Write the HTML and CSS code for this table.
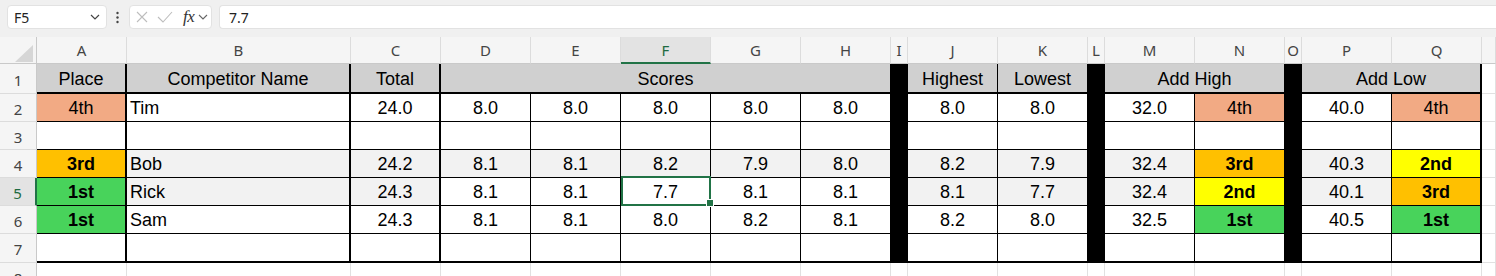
FILE: index.html
```html
<!DOCTYPE html>
<html>
<head>
<meta charset="utf-8">
<link rel="stylesheet" href="styles.css">
</head>
<body>
<div class="toolbar">
  <div class="namebox"><span>F5</span><svg class="chev" width="10" height="6" viewBox="0 0 10 6"><path d="M1 1 L5 5 L9 1" fill="none" stroke="#444" stroke-width="1.2"/></svg></div>
  <svg class="dots" width="3" height="24" viewBox="0 0 3 24"><circle cx="1.5" cy="8" r="1.2" fill="#444"/><circle cx="1.5" cy="12.5" r="1.2" fill="#444"/><circle cx="1.5" cy="17" r="1.2" fill="#444"/></svg>
  <div class="fxbox">
    <svg class="ic-x" width="12" height="12" viewBox="0 0 12 12"><path d="M1 1 L11 11 M11 1 L1 11" stroke="#bdbdbd" stroke-width="1.1" fill="none"/></svg>
    <svg class="ic-ok" width="16" height="12" viewBox="0 0 16 12"><path d="M1 6 L6 11 L15 1" stroke="#bdbdbd" stroke-width="1.1" fill="none"/></svg>
    <span class="fx">fx</span>
    <svg class="chev2" width="10" height="6" viewBox="0 0 10 6"><path d="M1 1 L5 5 L9 1" fill="none" stroke="#666" stroke-width="1.1"/></svg>
  </div>
  <div class="formula">7.7</div>
</div>

<div class="sheet">
  <!-- column headers -->
  <div class="corner"><svg width="37" height="27" viewBox="0 0 37 27"><polygon points="33,8 33,25 15,25" fill="#d6d6d6"/></svg></div>
  <div class="ch">A</div><div class="ch">B</div><div class="ch">C</div><div class="ch">D</div><div class="ch">E</div>
  <div class="ch selcol">F</div><div class="ch">G</div><div class="ch">H</div><div class="ch">I</div><div class="ch">J</div>
  <div class="ch">K</div><div class="ch">L</div><div class="ch">M</div><div class="ch">N</div><div class="ch">O</div>
  <div class="ch">P</div><div class="ch">Q</div><div class="ch"></div>

  <!-- row 1 -->
  <div class="rh">1</div>
  <div class="c hd r1 tr">Place</div>
  <div class="c hd r1 tr">Competitor Name</div>
  <div class="c hd r1 tr">Total</div>
  <div class="c hd r1 span5">Scores</div>
  <div class="k"></div>
  <div class="c hd r1">Highest</div>
  <div class="c hd r1">Lowest</div>
  <div class="k"></div>
  <div class="c hd r1 span2">Add High</div>
  <div class="k"></div>
  <div class="c hd r1 span2 tr">Add Low</div>
  <div class="g"></div>

  <!-- row 2 -->
  <div class="rh">2</div>
  <div class="c tr salmon">4th</div>
  <div class="c tr l">Tim</div>
  <div class="c tr">24.0</div>
  <div class="c">8.0</div><div class="c">8.0</div><div class="c">8.0</div><div class="c">8.0</div><div class="c">8.0</div>
  <div class="k"></div>
  <div class="c">8.0</div><div class="c">8.0</div>
  <div class="k"></div>
  <div class="c">32.0</div><div class="c salmon">4th</div>
  <div class="k"></div>
  <div class="c">40.0</div><div class="c tr salmon">4th</div>
  <div class="g"></div>

  <!-- row 3 -->
  <div class="rh">3</div>
  <div class="c tr"></div><div class="c tr"></div><div class="c tr"></div>
  <div class="c"></div><div class="c"></div><div class="c"></div><div class="c"></div><div class="c"></div>
  <div class="k"></div>
  <div class="c"></div><div class="c"></div>
  <div class="k"></div>
  <div class="c"></div><div class="c"></div>
  <div class="k"></div>
  <div class="c"></div><div class="c tr"></div>
  <div class="g"></div>

  <!-- row 4 -->
  <div class="rh">4</div>
  <div class="c tr b orange">3rd</div>
  <div class="c tr l lt">Bob</div>
  <div class="c tr lt">24.2</div>
  <div class="c lt">8.1</div><div class="c lt">8.1</div><div class="c lt">8.2</div><div class="c lt">7.9</div><div class="c lt">8.0</div>
  <div class="k"></div>
  <div class="c lt">8.2</div><div class="c lt">7.9</div>
  <div class="k"></div>
  <div class="c lt">32.4</div><div class="c b orange">3rd</div>
  <div class="k"></div>
  <div class="c lt">40.3</div><div class="c tr b yellow">2nd</div>
  <div class="g"></div>

  <!-- row 5 -->
  <div class="rh selrow">5</div>
  <div class="c tr b green">1st</div>
  <div class="c tr l lt">Rick</div>
  <div class="c tr lt">24.3</div>
  <div class="c">8.1</div><div class="c">8.1</div><div class="c sel">7.7</div><div class="c">8.1</div><div class="c">8.1</div>
  <div class="k"></div>
  <div class="c lt">8.1</div><div class="c lt">7.7</div>
  <div class="k"></div>
  <div class="c lt">32.4</div><div class="c b yellow">2nd</div>
  <div class="k"></div>
  <div class="c lt">40.1</div><div class="c tr b orange">3rd</div>
  <div class="g"></div>

  <!-- row 6 -->
  <div class="rh">6</div>
  <div class="c tr b green">1st</div>
  <div class="c tr l">Sam</div>
  <div class="c tr">24.3</div>
  <div class="c">8.1</div><div class="c">8.1</div><div class="c">8.0</div><div class="c">8.2</div><div class="c">8.1</div>
  <div class="k"></div>
  <div class="c">8.2</div><div class="c">8.0</div>
  <div class="k"></div>
  <div class="c">32.5</div><div class="c b green">1st</div>
  <div class="k"></div>
  <div class="c">40.5</div><div class="c tr b green">1st</div>
  <div class="g"></div>

  <!-- row 7 -->
  <div class="rh">7</div>
  <div class="c r7 tr"></div><div class="c r7 tr"></div><div class="c r7 tr"></div>
  <div class="c r7"></div><div class="c r7"></div><div class="c r7"></div><div class="c r7"></div><div class="c r7"></div>
  <div class="k"></div>
  <div class="c r7"></div><div class="c r7"></div>
  <div class="k"></div>
  <div class="c r7"></div><div class="c r7"></div>
  <div class="k"></div>
  <div class="c r7"></div><div class="c r7 tr"></div>
  <div class="g"></div>

  <!-- row 8 -->
  <div class="rh">8</div>
  <div class="g"></div><div class="g"></div><div class="g"></div><div class="g"></div><div class="g"></div>
  <div class="g"></div><div class="g"></div><div class="g"></div><div class="g"></div><div class="g"></div>
  <div class="g"></div><div class="g"></div><div class="g"></div><div class="g"></div><div class="g"></div>
  <div class="g"></div><div class="g"></div><div class="g"></div>
</div>
</body>
</html>
```

FILE: styles.css
```css
* { box-sizing: border-box; }

body {
  margin: 0;
  width: 1496px;
  height: 276px;
  overflow: hidden;
  background: #fff;
  font-family: "Liberation Sans", Arial, sans-serif;
}

/* ---------- formula bar ---------- */
.toolbar {
  display: flex;
  align-items: flex-start;
  height: 37px;
  padding: 5px 0 0 7px;
  background: #f0f0f0;
}

.namebox {
  width: 100px;
  height: 24px;
  background: #fff;
  border: 1px solid #e2e2e2;
  border-radius: 4px;
  display: flex;
  align-items: center;
  justify-content: space-between;
  padding: 0 6px 0 6px;
  font: 14px "Noto Sans", sans-serif;
  color: #222;
}

.dots {
  margin-left: 9px;
}

.fxbox {
  margin-left: 10px;
  width: 83px;
  height: 24px;
  background: #fff;
  border: 1px solid #e2e2e2;
  border-radius: 4px;
  display: flex;
  align-items: center;
  padding-left: 6px;
}

.ic-ok { margin-left: 9px; }

.fx {
  margin-left: 10px;
  font: italic 17px "Liberation Serif", "DejaVu Serif", serif;
  color: #333;
  letter-spacing: -0.5px;
}

.chev2 { margin-left: 4px; }

.formula {
  margin-left: 7px;
  flex: 1;
  height: 24px;
  background: #fff;
  border: 1px solid #e2e2e2;
  border-right: none;
  border-radius: 4px 0 0 4px;
  padding-left: 9px;
  display: flex;
  align-items: center;
  font: 14px "Noto Sans", sans-serif;
  color: #222;
}

/* ---------- sheet ---------- */
.sheet {
  display: grid;
  grid-template-columns: 37px 90px 224px repeat(6, 90px) 17px 90px 90px 17px 90px 90px 17px 90px 90px 1fr;
  grid-template-rows: 27px 30px 28px 28px 28px 28px 28px 29px 28px;
}

.corner {
  background: #f5f5f5;
  border-right: 1px solid #c9c9c9;
  border-bottom: 1px solid #c9c9c9;
  overflow: hidden;
}
.corner svg { display: block; }

.ch {
  background: #f5f5f5;
  border-right: 1px solid #dcdcdc;
  border-bottom: 1px solid #c9c9c9;
  display: flex;
  align-items: center;
  justify-content: center;
  font: 15px "Noto Sans", sans-serif;
  color: #444;
}

.selcol {
  background: #e3e3e3;
  color: #1e6b41;
  border-bottom: 2px solid #217346;
}

.rh {
  background: #f5f5f5;
  border-right: 1px solid #c9c9c9;
  border-bottom: 1px solid #dcdcdc;
  display: flex;
  align-items: center;
  justify-content: center;
  padding-top: 2px;
  font: 15px "Noto Sans", sans-serif;
  color: #444;
}

.selrow {
  background: #e3e3e3;
  color: #1e6b41;
  border-right: 2px solid #217346;
}

.c {
  border-right: 1px solid #000;
  border-bottom: 1px solid #000;
  display: flex;
  align-items: center;
  justify-content: center;
  padding-top: 2px;
  font-size: 18px;
  color: #000;
  white-space: nowrap;
}

.l { justify-content: flex-start; padding-left: 3px; }
.b { font-weight: bold; }
.tr { border-right-width: 2px; }
.r1 { border-bottom-width: 2px; }
.r7 { border-bottom-width: 2px; }
.hd { background: #d0d0d0; }
.span5 { grid-column: span 5; }
.span2 { grid-column: span 2; }

.lt { background: #f2f2f2; }
.salmon { background: #f2aa84; }
.orange { background: #ffc000; }
.yellow { background: #ffff00; }
.green { background: #48d35b; }

.k { background: #000; }

.g {
  border-right: 1px solid #e1e1e1;
  border-bottom: 1px solid #e1e1e1;
  background: #fff;
}

.sel { position: relative; }
.sel::after {
  content: "";
  position: absolute;
  left: 0;
  top: -2px;
  right: -1px;
  bottom: -1px;
  border: 2px solid #217346;
}
.sel::before {
  content: "";
  position: absolute;
  right: -4px;
  bottom: -2px;
  width: 6px;
  height: 6px;
  background: #217346;
  border: 1px solid #fff;
  z-index: 2;
}
```
